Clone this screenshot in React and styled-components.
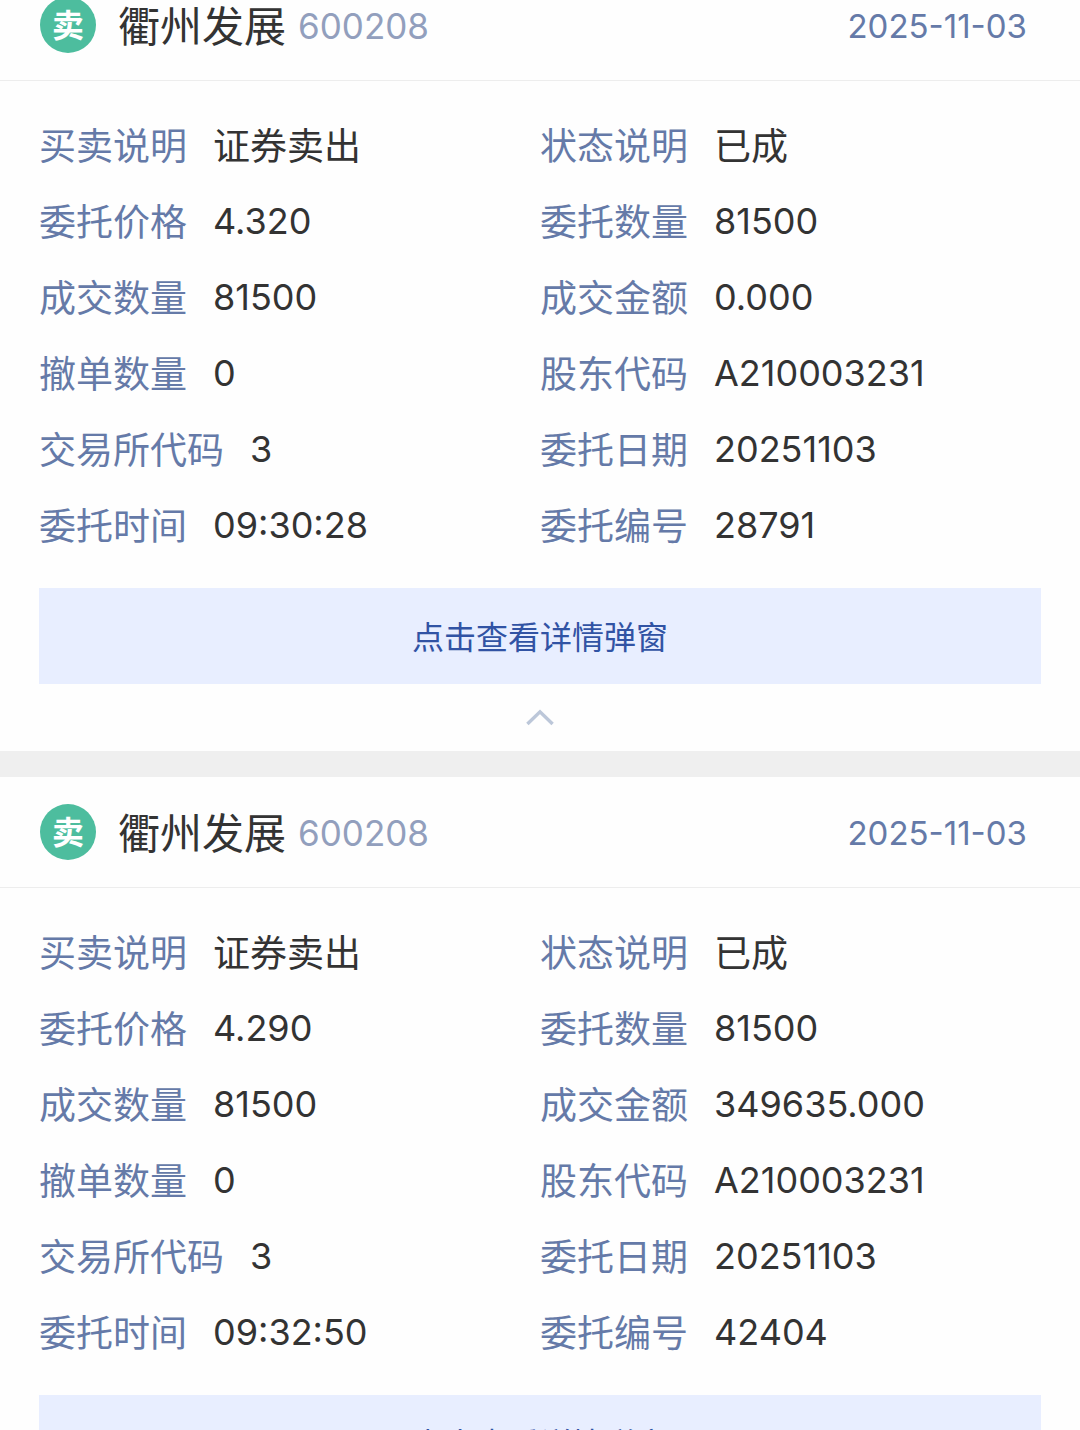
import React from "react";
import styled, { createGlobalStyle } from "styled-components";

const orders = [
  {
    name: "衢州发展",
    code: "600208",
    date: "2025-11-03",
    fields: [
      { label: "买卖说明", value: "证券卖出", text: true },
      { label: "状态说明", value: "已成", text: true },
      { label: "委托价格", value: "4.320" },
      { label: "委托数量", value: "81500" },
      { label: "成交数量", value: "81500" },
      { label: "成交金额", value: "0.000" },
      { label: "撤单数量", value: "0" },
      { label: "股东代码", value: "A210003231" },
      { label: "交易所代码", value: "3" },
      { label: "委托日期", value: "20251103" },
      { label: "委托时间", value: "09:30:28" },
      { label: "委托编号", value: "28791" },
    ],
  },
  {
    name: "衢州发展",
    code: "600208",
    date: "2025-11-03",
    fields: [
      { label: "买卖说明", value: "证券卖出", text: true },
      { label: "状态说明", value: "已成", text: true },
      { label: "委托价格", value: "4.290" },
      { label: "委托数量", value: "81500" },
      { label: "成交数量", value: "81500" },
      { label: "成交金额", value: "349635.000" },
      { label: "撤单数量", value: "0" },
      { label: "股东代码", value: "A210003231" },
      { label: "交易所代码", value: "3" },
      { label: "委托日期", value: "20251103" },
      { label: "委托时间", value: "09:32:50" },
      { label: "委托编号", value: "42404" },
    ],
  },
];

const OrderCard = ({ order }) => {
  return (
    <Card>
      <CardHeader>
        <Badge>卖</Badge>
        <Name>{order.name}</Name>
        <Code>{order.code}</Code>
        <OrderDate>{order.date}</OrderDate>
      </CardHeader>
      <Fields>
        {order.fields.map((field) => (
          <Field key={field.label}>
            <Label>{field.label}</Label>
            <Value $text={field.text}>{field.value}</Value>
          </Field>
        ))}
      </Fields>
      <DetailButton type="button">点击查看详情弹窗</DetailButton>
      <FoldButton type="button" aria-label="收起">
        <svg width="30" height="20" viewBox="0 0 30 20" fill="none">
          <path
            d="M2.4 16 L15 3.8 L27.6 16"
            stroke="#bcc7d9"
            strokeWidth="3.4"
          />
        </svg>
      </FoldButton>
    </Card>
  );
};

const App = () => {
  return (
    <Screen>
      <GlobalStyle />
      <OrderList>
        {orders.map((order, ind) => (
          <OrderCard key={ind} order={order} />
        ))}
      </OrderList>
    </Screen>
  );
};

const GlobalStyle = createGlobalStyle`
  * {
    box-sizing: border-box;
  }
  body {
    margin: 0;
    background-color: #efefef;
    font-family: Inter, "Noto Sans CJK SC", sans-serif;
  }
  button {
    font-family: inherit;
    border: none;
    cursor: pointer;
  }
`;

const Screen = styled.main`
  height: 100vh;
  overflow: hidden;
`;

/* the list is scrolled a little, the first header is cut by the top edge */
const OrderList = styled.div`
  display: flex;
  flex-direction: column;
  gap: 26px;
  margin-top: -30px;
`;

const Card = styled.article`
  display: flex;
  flex-direction: column;
  background-color: #fefefe;
`;

const CardHeader = styled.header`
  display: flex;
  align-items: center;
  height: 111px;
  padding: 0 53px 0 40px;
  border-bottom: 1px solid #ededed;
`;

const Badge = styled.span`
  display: flex;
  align-items: center;
  justify-content: center;
  width: 56px;
  height: 56px;
  padding-top: 2px;
  border-radius: 50%;
  background-color: #4dbd9e;
  color: #ffffff;
  font-size: 32px;
  line-height: 32px;
  font-weight: 700;
`;

const Name = styled.h2`
  margin: 0 12px 0 22px;
  padding-top: 4px;
  color: #333333;
  font-size: 42px;
  line-height: 56px;
  font-weight: 400;
`;

const Code = styled.span`
  padding-top: 2px;
  color: #929fbd;
  font-size: 35px;
  line-height: 56px;
`;

const OrderDate = styled.time`
  margin-left: auto;
  padding-top: 2px;
  color: #657aa8;
  font-size: 33px;
  line-height: 56px;
`;

const Fields = styled.dl`
  display: grid;
  grid-template-columns: 1fr 1fr;
  margin: 0;
  padding: 27px 39px 24px;
`;

const Field = styled.div`
  display: flex;
  align-items: center;
  gap: 26px;
  height: 76px;
`;

/* Chinese glyphs sit higher in the line than the digits do */
const Label = styled.dt`
  padding-top: 2px;
  color: #657aa8;
  font-size: 37px;
  line-height: 56px;
`;

const Value = styled.dd`
  margin: 0;
  padding: ${(props) => (props.$text ? "2px 0 0" : "0 0 2px")};
  color: #333333;
  font-size: ${(props) => (props.$text ? "37px" : "36px")};
  line-height: 56px;
`;

const DetailButton = styled.button`
  height: 96px;
  margin: 0 39px;
  padding: 0 0 2px;
  background-color: #e8eeff;
  color: #3153a4;
  font-size: 32px;
`;

const FoldButton = styled.button`
  display: flex;
  align-items: center;
  justify-content: center;
  height: 67px;
  background-color: transparent;
`;

export default App;
